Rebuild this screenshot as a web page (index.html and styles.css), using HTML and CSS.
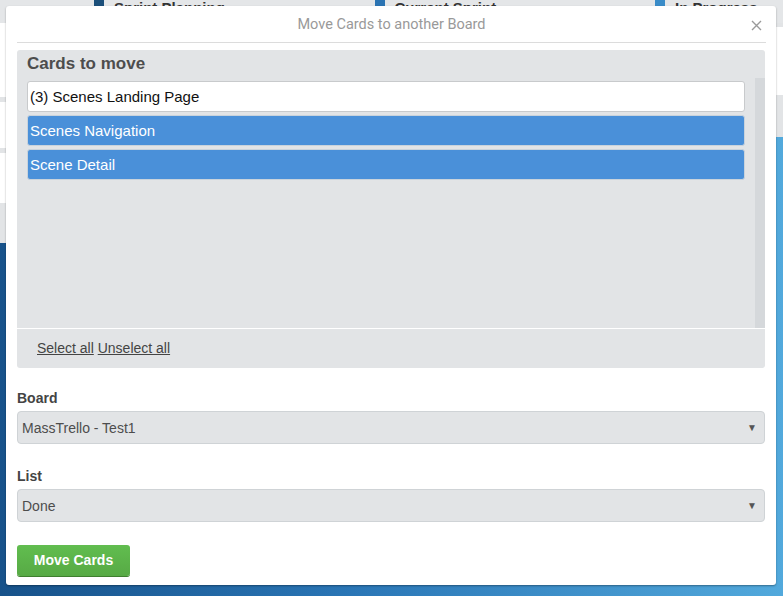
FILE: index.html
```html
<!DOCTYPE html>
<html>
<head>
<meta charset="utf-8">
<link rel="stylesheet" href="styles.css">
</head>
<body>
<div class="board">
  <div class="topbar">
    <div class="list-title"><span class="sq sq1"></span>Sprint Planning</div>
    <div class="list-title"><span class="sq sq2"></span>Current Sprint</div>
    <div class="list-title"><span class="sq sq3"></span>In Progress</div>
  </div>
  <div class="lanes">
    <div class="lane lane-left">
      <div class="blk white h74"></div>
      <div class="blk grey h5"></div>
      <div class="blk white h46"></div>
      <div class="blk grey h5"></div>
      <div class="blk white h50"></div>
      <div class="blk grey h40"></div>
    </div>
    <div class="lane lane-right">
      <div class="blk grey h4"></div>
      <div class="blk white h68"><span class="peek">Ec</span></div>
      <div class="blk grey h42"></div>
    </div>
  </div>
</div>

<div class="modal">
  <div class="modal-header">
    <span></span>
    <h1 class="modal-title">Move Cards to another Board</h1>
    <span class="close">
      <svg width="11" height="11" viewBox="0 0 11 11"><path d="M1 1L10 10M10 1L1 10" stroke="#9a9a9a" stroke-width="1.4" fill="none"/></svg>
    </span>
  </div>
  <div class="modal-body">
    <div class="panel">
      <div class="panel-title">Cards to move</div>
      <div class="card-area">
        <div class="card-list">
          <div class="card">(3) Scenes Landing Page</div>
          <div class="card selected">Scenes Navigation</div>
          <div class="card selected">Scene Detail</div>
        </div>
        <div class="scroll-track"></div>
      </div>
      <div class="panel-footer"><a href="#">Select all</a> <a href="#">Unselect all</a></div>
    </div>

    <div class="field field-board">
      <div class="label">Board</div>
      <div class="select"><span>MassTrello - Test1</span><span class="arrow">&#9660;</span></div>
    </div>
    <div class="field field-list">
      <div class="label">List</div>
      <div class="select"><span>Done</span><span class="arrow">&#9660;</span></div>
    </div>
    <button class="btn">Move Cards</button>
  </div>
</div>
</body>
</html>
```

FILE: styles.css
```css
* { box-sizing: border-box; }
html, body { margin: 0; padding: 0; }
body {
  width: 783px;
  height: 596px;
  overflow: hidden;
  position: relative;
  font-family: "Liberation Sans", Arial, sans-serif;
  background: linear-gradient(to right, #17528a 0%, #2a76b6 45%, #52a9dc 100%);
}
.board { display: flex; flex-direction: column; }
.topbar {
  height: 23px;
  background: #e4e6e8;
  display: flex;
  padding-left: 94px;
  overflow: hidden;
}
.list-title {
  flex: 0 0 280.5px;
  display: flex;
  align-items: flex-start;
  font-weight: bold;
  font-size: 15px;
  line-height: 16px;
  color: #333;
  white-space: nowrap;
}
.sq { width: 10px; height: 14px; margin-right: 10px; margin-top: -4px; flex: none; }
.sq1 { background: #1b4f7a; }
.sq2 { background: #2b74b3; }
.sq3 { background: #3a8cc8; }
.lanes { display: flex; }
.lane { display: flex; flex-direction: column; }
.lane-left { flex: 1; }
.lane-right { width: 83px; }
.blk.white { background: #fff; }
.blk.grey { background: #e2e4e6; }
.h4 { height: 4px; } .h5 { height: 5px; } .h40 { height: 40px; } .h42 { height: 42px; }
.h46 { height: 46px; } .h50 { height: 50px; } .h68 { height: 68px; } .h74 { height: 74px; }
.peek { display: block; padding: 20px 0 0 92px; font-size: 14px; color: #333; line-height: 16px; }

.modal {
  position: absolute;
  left: 6px;
  top: 6px;
  width: 770px;
  height: 579px;
  background: #fff;
  border-radius: 3px;
  box-shadow: 0 1px 2px rgba(0,0,0,0.35);
  display: flex;
  flex-direction: column;
}
.modal-header {
  margin: 0 10px 0 11px;
  height: 37px;
  border-bottom: 1px solid #dcdcdc;
  display: grid;
  grid-template-columns: 1fr auto 1fr;
  align-items: center;
}
.modal-title {
  margin: 0;
  font-family: Roboto, "Liberation Sans", sans-serif;
  font-weight: normal;
  font-size: 14.5px;
  color: #999;
  line-height: 36px;
  padding-top: 1px;
}
.close { justify-self: end; margin-right: 4px; display: flex; margin-top: 1px; }
.modal-body { padding: 7px 11px 9px; display: flex; flex-direction: column; }
.panel { background: #e2e4e6; border-radius: 3px; }
.panel-title {
  padding: 3px 10px 0;
  font-weight: bold;
  font-size: 17px;
  line-height: 21px;
  color: #4d4d4d;
}
.card-area { margin: 4px 0 0 10px; height: 250px; display: flex; }
.card-list { flex: 1; padding-top: 3px; display: flex; flex-direction: column; gap: 3px; }
.card {
  height: 31px;
  border: 1px solid #c8cacc;
  border-radius: 3px;
  background: #fff;
  padding-left: 2px;
  font-size: 15px;
  line-height: 29px;
  color: #111;
}
.card.selected { background: #4a90d9; border-color: #c9d3dc; color: #fff; }
.scroll-track { width: 10px; margin-left: 10px; background: #d5d8db; }
.panel-footer {
  border-top: 1px solid #fff;
  height: 40px;
  padding-left: 20px;
  line-height: 38px;
  font-size: 14px;
}
.panel-footer a { color: #444; text-decoration: underline; }
.field { display: flex; flex-direction: column; }
.field-board { margin-top: 20px; }
.field-list { margin-top: 22px; }
.label { font-weight: bold; font-size: 14px; line-height: 20px; color: #444; margin-bottom: 3px; }
.select {
  height: 33px;
  background: #e2e4e6;
  border: 1px solid #cfd3d6;
  border-radius: 4px;
  display: flex;
  align-items: center;
  justify-content: space-between;
  padding: 0 7px 0 4px;
  font-size: 14px;
  color: #4d4d4d;
}
.arrow { font-size: 10px; color: #555; }
.btn {
  margin-top: 23px;
  width: 113px;
  height: 31px;
  border: none;
  border-radius: 3px;
  background: linear-gradient(#61bd4f, #57aa45);
  box-shadow: 0 1px 0 #3f7f2f;
  color: #fff;
  font-family: "Liberation Sans", Arial, sans-serif;
  font-weight: bold;
  font-size: 14px;
  padding: 0 0 1px;
  text-align: center;
}
```
